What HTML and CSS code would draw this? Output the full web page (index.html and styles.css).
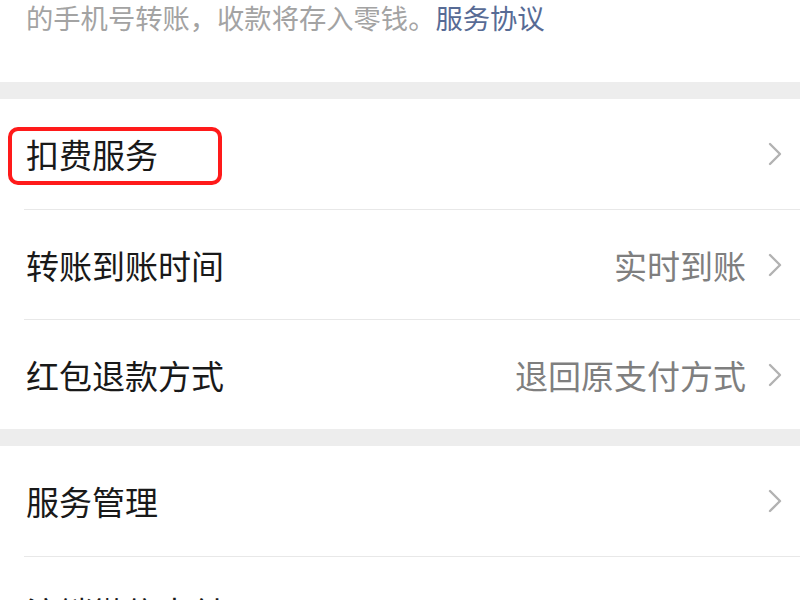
FILE: index.html
```html
<!DOCTYPE html>
<html lang="zh-CN">
<head>
<meta charset="utf-8">
<link rel="stylesheet" href="styles.css">
</head>
<body>
<div class="intro">
  <p class="intro-text">的手机号转账，收款将存入零钱。<a class="link">服务协议</a></p>
</div>
<div class="band"></div>
<div class="group">
  <div class="row">
    <div class="inner"><span class="label">扣费服务</span><span class="value"></span><svg class="chev" width="14" height="24" viewBox="0 0 14 24"><path d="M2 2 L12 12 L2 22" fill="none" stroke="#b2b2b2" stroke-width="2.4" stroke-linecap="round" stroke-linejoin="round"/></svg></div>
    <div class="highlight"></div>
  </div>
  <div class="row">
    <div class="inner"><span class="label">转账到账时间</span><span class="value">实时到账</span><svg class="chev" width="14" height="24" viewBox="0 0 14 24"><path d="M2 2 L12 12 L2 22" fill="none" stroke="#b2b2b2" stroke-width="2.4" stroke-linecap="round" stroke-linejoin="round"/></svg></div>
  </div>
  <div class="row">
    <div class="inner"><span class="label">红包退款方式</span><span class="value">退回原支付方式</span><svg class="chev" width="14" height="24" viewBox="0 0 14 24"><path d="M2 2 L12 12 L2 22" fill="none" stroke="#b2b2b2" stroke-width="2.4" stroke-linecap="round" stroke-linejoin="round"/></svg></div>
  </div>
</div>
<div class="band"></div>
<div class="group">
  <div class="row">
    <div class="inner"><span class="label">服务管理</span><span class="value"></span><svg class="chev" width="14" height="24" viewBox="0 0 14 24"><path d="M2 2 L12 12 L2 22" fill="none" stroke="#b2b2b2" stroke-width="2.4" stroke-linecap="round" stroke-linejoin="round"/></svg></div>
  </div>
  <div class="row">
    <div class="inner"><span class="label">注销微信支付</span><span class="value"></span><svg class="chev" width="14" height="24" viewBox="0 0 14 24"><path d="M2 2 L12 12 L2 22" fill="none" stroke="#b2b2b2" stroke-width="2.4" stroke-linecap="round" stroke-linejoin="round"/></svg></div>
  </div>
</div>
</body>
</html>
```

FILE: styles.css
```css
html, body {
  margin: 0;
  padding: 0;
  background: #ffffff;
}
body {
  width: 800px;
  height: 600px;
  overflow: hidden;
  font-family: "Noto Sans CJK SC", "Noto Sans", sans-serif;
}
.intro {
  height: 83px;
  padding-left: 26px;
  box-sizing: border-box;
}
.intro-text {
  margin: -1px 0 0 0;
  font-size: 27.3px;
  line-height: 36px;
  color: #a3a3a3;
  white-space: nowrap;
}
.link {
  color: #576b95;
}
.band {
  height: 17px;
  background: #ededed;
}
.group {
  background: #ffffff;
}
.row {
  position: relative;
  padding-left: 24px;
}
.inner {
  display: flex;
  align-items: center;
  height: 110px;
  box-sizing: border-box;
  padding-left: 2px;
  padding-right: 18px;
}
.row + .row .inner {
  border-top: 1px solid #e8e8e8;
}
.label {
  flex: 1;
  font-size: 33px;
  color: #191919;
  white-space: nowrap;
}
.value {
  font-size: 33px;
  color: #7f7f7f;
  margin-right: 22px;
  white-space: nowrap;
}
.chev {
  display: block;
  flex: none;
}
.highlight {
  position: absolute;
  left: 8px;
  top: 28px;
  width: 214px;
  height: 58px;
  box-sizing: border-box;
  border: 4px solid #ff1a1a;
  border-radius: 10px;
}
```
